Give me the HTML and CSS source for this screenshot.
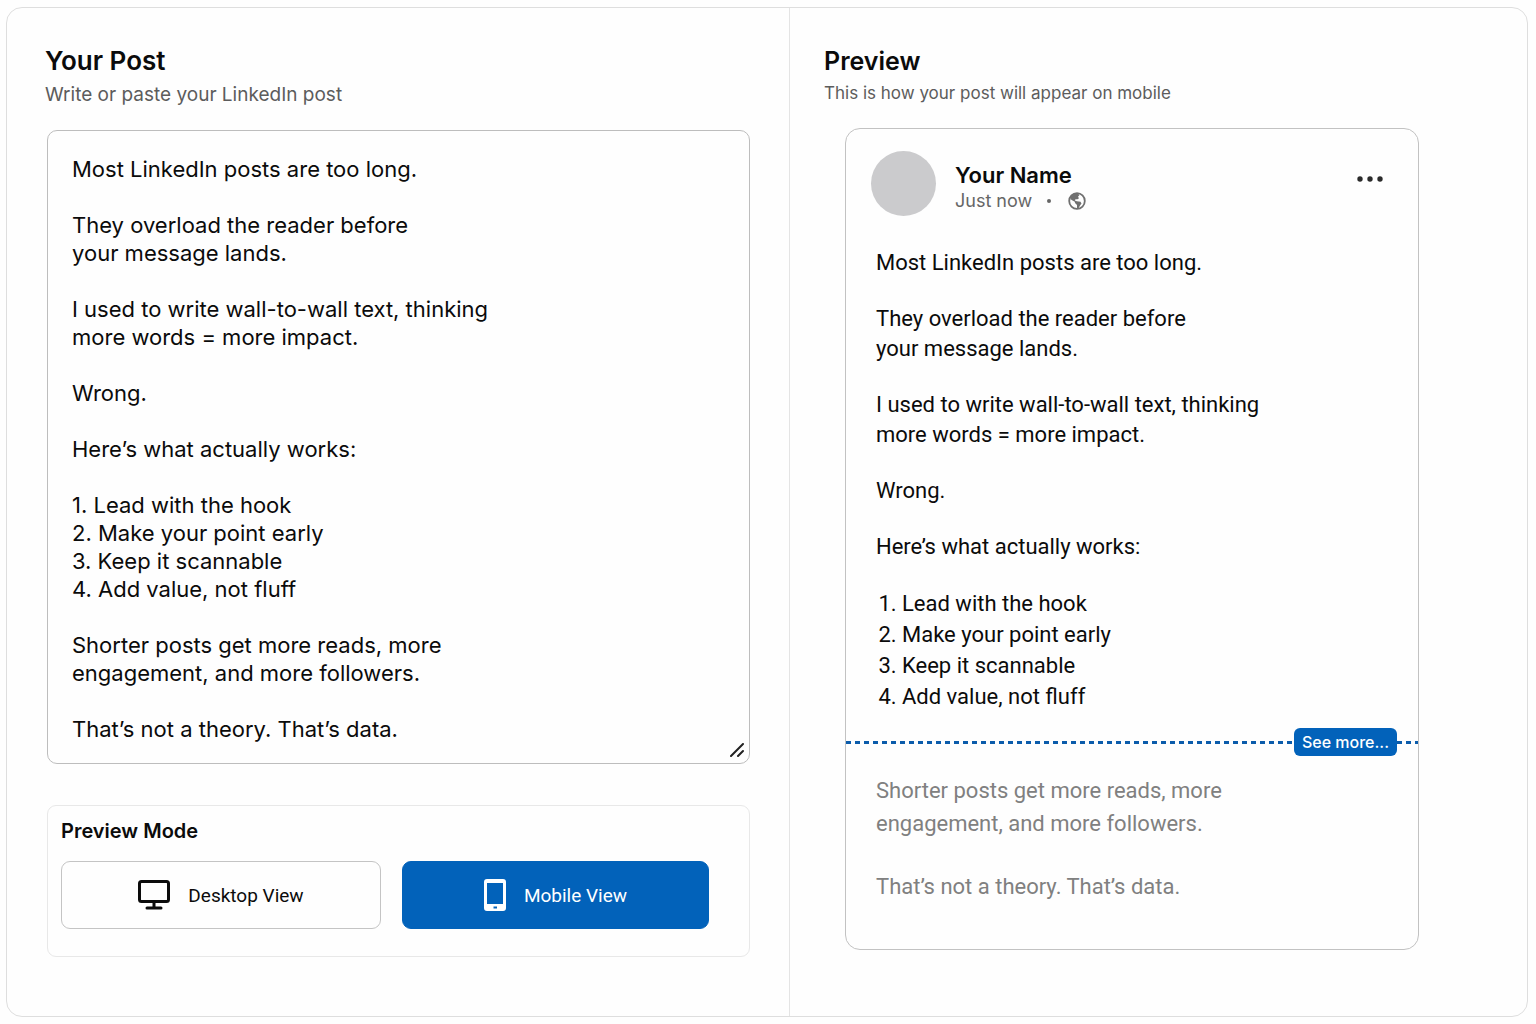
FILE: index.html
```html
<!DOCTYPE html>
<html lang="en">
<head>
<meta charset="UTF-8" />
<meta name="viewport" content="width=device-width, initial-scale=1" />
<title>LinkedIn Post Preview</title>
<link rel="stylesheet" href="styles.css">
</head>
<body>

<main class="app">

  <!-- Editor -->
  <section class="editor">
    <h1 class="title"><label for="post-input">Your Post</label></h1>
    <p class="subtitle">Write or paste your LinkedIn post</p>

    <div class="post-box">
      <textarea id="post-input" class="post-input" rows="21" spellcheck="false">
Most LinkedIn posts are too long.

They overload the reader before
your message lands.

I used to write wall-to-wall text, thinking
more words = more impact.

Wrong.

Here’s what actually works:

1. Lead with the hook
2. Make your point early
3. Keep it scannable
4. Add value, not fluff

Shorter posts get more reads, more
engagement, and more followers.

That’s not a theory. That’s data.</textarea>
      <svg class="grip" viewBox="0 0 14 14" aria-hidden="true">
        <path d="M1 13 L13 1 M8 13 L13 8" />
      </svg>
    </div>

    <div class="mode">
      <h2 class="mode-title">Preview Mode</h2>
      <div class="mode-buttons">
        <button type="button" class="mode-btn" aria-pressed="false">
          <svg class="icon-desktop" viewBox="0 0 32 30" aria-hidden="true">
            <rect x="1.5" y="1.5" width="29" height="20" rx="2" />
            <path d="M16 22v6M9 28h14" />
          </svg>
          Desktop View
        </button>
        <button type="button" class="mode-btn active" aria-pressed="true">
          <svg class="icon-mobile" viewBox="0 0 22 32" aria-hidden="true">
            <path fill-rule="evenodd" d="M3 0h16a3 3 0 0 1 3 3v26a3 3 0 0 1-3 3H3a3 3 0 0 1-3-3V3a3 3 0 0 1 3-3zM3 4v21h16V4zM9.500 27.500v2h3.500v-2z" />
          </svg>
          Mobile View
        </button>
      </div>
    </div>
  </section>

  <!-- Preview -->
  <section class="preview">
    <h2 class="title">Preview</h2>
    <p class="subtitle">This is how your post will appear on mobile</p>

    <article class="card">
      <header class="card-header">
        <div class="avatar"></div>
        <div class="author">
          <h3 class="name">Your Name</h3>
          <p class="meta">
            <span>Just now</span>
            <span class="dot"></span>
            <svg class="icon-globe" viewBox="0 0 18 18" aria-label="Public" role="img">
              <circle cx="9" cy="9" r="7.800" />
              <path d="M2 5.500 4.500 2 9.500 1.300 11.500 3 10 4.800 11 6.200 9.500 7.200 7.500 7.300 6.800 8.600 8.800 9.300 12.500 9.800 13.500 11.500 12 13.500 10.500 16.500 9 16 9 13 7 11 6.800 9.800 4.500 8.500 3 7.500z" />
            </svg>
          </p>
        </div>
        <button type="button" class="more" aria-label="More options">
          <svg class="icon-more" viewBox="0 0 26 6" aria-hidden="true">
            <circle cx="3" cy="3" r="2.700" />
            <circle cx="13" cy="3" r="2.700" />
            <circle cx="23" cy="3" r="2.700" />
          </svg>
        </button>
      </header>

      <div class="card-body">
        <p>Most LinkedIn posts are too long.</p>
        <p>They overload the reader before<br>your message lands.</p>
        <p>I used to write wall-to-wall text, thinking<br>more words = more impact.</p>
        <p>Wrong.</p>
        <p>Here’s what actually works:</p>
        <ol class="steps">
          <li>Lead with the hook</li>
          <li>Make your point early</li>
          <li>Keep it scannable</li>
          <li>Add value, not fluff</li>
        </ol>
      </div>

      <!-- Fold line -->
      <div class="fold">
        <span class="fold-line"></span>
        <button type="button" class="see-more">See more...</button>
        <span class="fold-line fold-end"></span>
      </div>

      <div class="card-hidden">
        <p>Shorter posts get more reads, more<br>engagement, and more followers.</p>
        <p>That’s not a theory. That’s data.</p>
      </div>
    </article>
  </section>

</main>

</body>
</html>
```
FILE: styles.css
```css
* {
  box-sizing: border-box;
}
body {
  margin: 0;
  padding: 7px 8px 7px 6px;
  background: #fefefe;
  color: #0b0b0b;
  font-family: Inter, "Liberation Sans", sans-serif;
}
h1, h2, h3, p, ol {
  margin: 0;
}
button {
  font-family: inherit;
  cursor: pointer;
}
.app {
  display: grid;
  grid-template-columns: 783fr 737fr;
  min-height: calc(100vh - 14px);
  border: 1px solid #dedede;
  border-radius: 16px;
}
.editor {
  padding: 36px 39px 59px 38px;
  border-right: 1px solid #e4e4e4;
}
.preview {
  padding: 36px 108px 59px 34px;
}
.title {
  font-size: 26px;
  font-weight: 600;
  line-height: 34px;
}
.subtitle {
  margin-top: 6px;
  font-size: 19px;
  line-height: 22px;
  color: #5c5c5c;
}

/* Editor */
.post-box {
  position: relative;
  margin: 24px 0 41px 2px;
}
.post-input {
  display: block;
  width: 100%;
  padding: 24px 24px 20px;
  border: 1px solid #bdbdbd;
  border-radius: 10px;
  background: #fefefe;
  color: inherit;
  font-family: inherit;
  font-size: 22px;
  line-height: 28px;
  resize: none;
  overflow: hidden;
}
.grip {
  position: absolute;
  right: 6px;
  bottom: 7px;
  width: 14px;
  height: 14px;
  fill: none;
  stroke: #222;
  stroke-width: 2;
  stroke-linecap: round;
}
.mode {
  margin-left: 2px;
  padding: 12px 40px 27px 13px;
  border: 1px solid #e8e8e8;
  border-radius: 9px;
}
.mode-title {
  font-size: 20px;
  font-weight: 600;
  line-height: 26px;
}
.mode-buttons {
  display: grid;
  grid-template-columns: 320fr 307fr;
  gap: 21px;
  margin-top: 17px;
}
.mode-btn {
  display: flex;
  align-items: center;
  justify-content: center;
  gap: 18px;
  height: 68px;
  border: 1px solid #c4c4c4;
  border-radius: 9px;
  background: #fefefe;
  color: #0b0b0b;
  font-family: Roboto, "Liberation Sans", sans-serif;
  font-size: 19px;
}
.mode-btn.active {
  border-color: #0262ba;
  background: #0262ba;
  color: #fff;
}
.icon-desktop {
  width: 32px;
  height: 30px;
  fill: none;
  stroke: #0b0b0b;
  stroke-width: 3;
  stroke-linecap: round;
}
.icon-mobile {
  width: 22px;
  height: 32px;
  fill: #fff;
}

/* Preview card */
.preview .title {
  font-size: 25px;
}
.preview .subtitle {
  margin-top: 4px;
  font-size: 17px;
}
.card {
  margin: 24px 0 0 21px;
  border: 1px solid #c2c2c2;
  border-radius: 15px;
}
.card-header {
  display: flex;
  padding: 22px 35px 0 25px;
}
.avatar {
  width: 65px;
  height: 65px;
  border-radius: 50%;
  background: #cbcbcd;
}
.author {
  flex: 1;
  padding: 10px 0 0 19px;
}
.name {
  font-size: 22px;
  font-weight: 600;
  line-height: 28px;
}
.meta {
  display: flex;
  align-items: center;
  font-size: 18px;
  line-height: 24px;
  color: #666;
}
.dot {
  width: 4px;
  height: 4px;
  margin: 0 17px 0 15px;
  border-radius: 50%;
  background: #666;
}
.icon-globe {
  width: 18px;
  height: 18px;
  fill: #707070;
}
.icon-globe circle {
  fill: none;
  stroke: #707070;
  stroke-width: 1.800;
}
.more {
  align-self: flex-start;
  display: flex;
  margin-top: 25px;
  padding: 0;
  border: none;
  background: none;
}
.icon-more {
  width: 26px;
  height: 6px;
  fill: #2b2b2b;
}
.card-body,
.card-hidden {
  display: flex;
  flex-direction: column;
  font-family: Roboto, "Liberation Sans", sans-serif;
  font-size: 22px;
}
.card-body {
  gap: 26px;
  padding: 32px 30px 0;
  line-height: 30px;
}
.steps {
  padding-left: 26px;
  line-height: 31px;
}
.fold {
  display: flex;
  align-items: center;
  margin: 16px 0 18px;
}
.fold-line {
  flex: 1;
  height: 3px;
  background: repeating-linear-gradient(90deg, #0b5cab 0 5px, transparent 5px 9px);
}
.fold-end {
  flex: 0 0 21px;
}
.see-more {
  height: 28px;
  padding: 0 8px;
  border: none;
  border-radius: 6px;
  background: #0262ba;
  color: #fff;
  font-size: 16px;
  font-weight: 500;
}
.card-hidden {
  gap: 30px;
  padding: 0 30px 46px;
  line-height: 33px;
  color: #808080;
}
```
